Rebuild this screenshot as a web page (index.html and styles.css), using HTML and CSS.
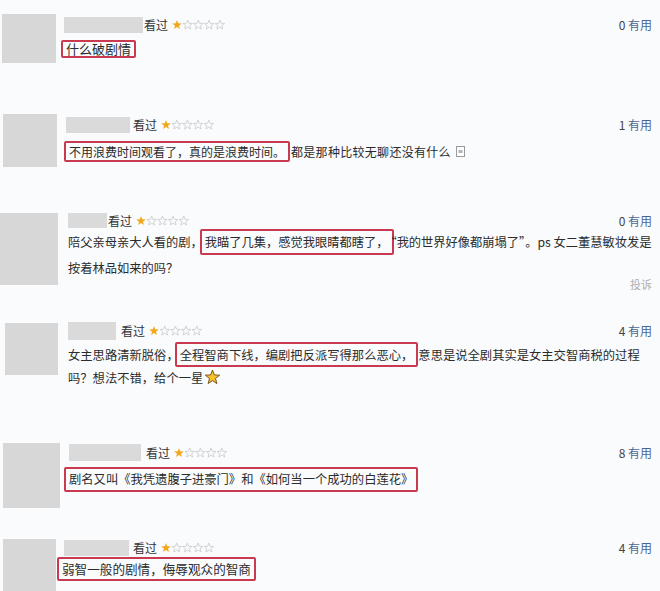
FILE: index.html
```html
<!DOCTYPE html>
<html lang="zh">
<head>
<meta charset="utf-8">
<link rel="stylesheet" href="styles.css">
</head>
<body>
<svg class="defs" width="0" height="0">
  <defs>
    <polygon id="st" points="5,0 6.23,3.3 9.76,3.45 7,5.65 7.94,9.05 5,7.1 2.06,9.05 3,5.65 0.24,3.45 3.77,3.3"/>
  </defs>
</svg>
<div class="list">

  <div class="review r1">
    <div class="avatar"></div>
    <div class="body">
      <div class="meta"><span class="name"></span><span class="seen">看过</span>
        <svg class="stars" width="53" height="10" viewBox="0 0 53 10"><use href="#st" class="on"/><use href="#st" x="10.7" class="off"/><use href="#st" x="21.4" class="off"/><use href="#st" x="32.1" class="off"/><use href="#st" x="42.8" class="off"/></svg>
        <span class="useful">0 <em>有用</em></span></div>
      <div class="text line"><span class="hl">什么破剧情</span></div>
    </div>
  </div>

  <div class="review r2">
    <div class="avatar"></div>
    <div class="body">
      <div class="meta"><span class="name"></span><span class="seen">看过</span>
        <svg class="stars" width="53" height="10" viewBox="0 0 53 10"><use href="#st" class="on"/><use href="#st" x="10.7" class="off"/><use href="#st" x="21.4" class="off"/><use href="#st" x="32.1" class="off"/><use href="#st" x="42.8" class="off"/></svg>
        <span class="useful">1 <em>有用</em></span></div>
      <div class="text line"><span class="hl">不用浪费时间观看了，真的是浪费时间。</span><span class="after">都是那种比较无聊还没有什么</span>
        <svg class="mini" width="9" height="11" viewBox="0 0 9 11"><rect x="0.5" y="0.5" width="8" height="10" fill="#fff" stroke="#9a9a9a"/><rect x="2.5" y="4" width="4" height="3" fill="#b5b5b5"/></svg></div>
    </div>
  </div>

  <div class="review r3">
    <div class="avatar"></div>
    <div class="body">
      <div class="meta"><span class="name"></span><span class="seen">看过</span>
        <svg class="stars" width="53" height="10" viewBox="0 0 53 10"><use href="#st" class="on"/><use href="#st" x="10.7" class="off"/><use href="#st" x="21.4" class="off"/><use href="#st" x="32.1" class="off"/><use href="#st" x="42.8" class="off"/></svg>
        <span class="useful">0 <em>有用</em></span></div>
      <p class="text wrap">陪父亲母亲大人看的剧，<span class="hl">我瞄了几集，感觉我眼睛都瞎了，</span><span class="quote">“</span>我的世界好像都崩塌了”。ps 女二董慧敏妆发是<br>按着林品如来的吗？</p>
      <div class="report">投诉</div>
    </div>
  </div>

  <div class="review r4">
    <div class="avatar"></div>
    <div class="body">
      <div class="meta"><span class="name"></span><span class="seen">看过</span>
        <svg class="stars" width="53" height="10" viewBox="0 0 53 10"><use href="#st" class="on"/><use href="#st" x="10.7" class="off"/><use href="#st" x="21.4" class="off"/><use href="#st" x="32.1" class="off"/><use href="#st" x="42.8" class="off"/></svg>
        <span class="useful">4 <em>有用</em></span></div>
      <p class="text wrap">女主思路清新脱俗，<span class="hl">全程智商下线，编剧把反派写得那么恶心，</span>意思是说全剧其实是女主交智商税的过程<br>吗？想法不错，给个一星<svg class="bigstar" width="15" height="15" viewBox="0 0 10 10"><use href="#st" class="emoji"/></svg></p>
    </div>
  </div>

  <div class="review r5">
    <div class="avatar"></div>
    <div class="body">
      <div class="meta"><span class="name"></span><span class="seen">看过</span>
        <svg class="stars" width="53" height="10" viewBox="0 0 53 10"><use href="#st" class="on"/><use href="#st" x="10.7" class="off"/><use href="#st" x="21.4" class="off"/><use href="#st" x="32.1" class="off"/><use href="#st" x="42.8" class="off"/></svg>
        <span class="useful">8 <em>有用</em></span></div>
      <div class="text line"><span class="hl">剧名又叫《我凭遗腹子进豪门》和《如何当一个成功的白莲花》</span></div>
    </div>
  </div>

  <div class="review r6">
    <div class="avatar"></div>
    <div class="body">
      <div class="meta"><span class="name"></span><span class="seen">看过</span>
        <svg class="stars" width="53" height="10" viewBox="0 0 53 10"><use href="#st" class="on"/><use href="#st" x="10.7" class="off"/><use href="#st" x="21.4" class="off"/><use href="#st" x="32.1" class="off"/><use href="#st" x="42.8" class="off"/></svg>
        <span class="useful">4 <em>有用</em></span></div>
      <div class="text line"><span class="hl">弱智一般的剧情，侮辱观众的智商</span></div>
    </div>
  </div>

</div>
</body>
</html>
```
FILE: styles.css
```css
* { box-sizing: border-box; }
html, body { margin: 0; padding: 0; }
body {
  background: #fafbfd;
  font-family: "Noto Sans CJK SC", "Noto Sans", sans-serif;
  color: #2b2b2b;
  width: 660px;
  height: 591px;
  overflow: hidden;
}
.defs { position: absolute; }
.list { padding: 14px 8px 0 0; }

.review {
  display: flex;
  align-items: flex-start;
  height: var(--h);
  padding-left: var(--x);
}
.avatar {
  flex: none;
  width: var(--aw);
  height: var(--ah);
  margin-top: var(--at, 0px);
  background: #d7d7d7;
}
.body {
  flex: 1;
  margin-left: var(--gap);
  margin-top: var(--bt, 0px);
  min-width: 0;
}
.meta {
  display: flex;
  align-items: center;
  height: var(--mh);
  font-size: 12px;
  line-height: 1;
}
.name {
  width: var(--nw);
  height: var(--mh);
  background: #dadada;
}
.seen { margin-left: var(--sg, 1px); color: #333; }
.stars { margin-left: 4px; }
.on { fill: #f2a81d; }
.off { fill: none; stroke: #c9c9c9; stroke-width: 0.8; }
.useful { margin-left: auto; color: #444; font-size: 12px; }
.useful em { font-style: normal; color: #4b6690; }

.text {
  margin: var(--tt) 0 0;
  font-size: var(--fs, 12px);
  line-height: var(--lh);
  white-space: nowrap;
}
.line { display: flex; align-items: center; }
.hl {
  border: 2px solid #c93a50;
  border-radius: 2px;
  padding: var(--hp, 0px) 3px;
  margin-left: var(--hx);
}
.line .hl { line-height: var(--bl); }
.after { margin-left: 1px; letter-spacing: 0.3px; }
.mini { margin-left: 5px; }
.quote { margin-left: -3px; }
.report {
  text-align: right;
  font-size: 11px;
  line-height: 14px;
  color: #b0b0b0;
  margin-top: -4px;
}
.bigstar { vertical-align: -2px; margin-left: 2px; }
.emoji { fill: #f6c22b; stroke: #6b4a12; stroke-width: 0.6; }

.r1 { --h: 100px; --x: 2px; --aw: 54px; --ah: 49px; --gap: 8px; --bt: 3px; --mh: 16px; --nw: 79px; --tt: 7px; --fs: 13px; --bl: 14px; --hx: -3px; }
.r2 { --h: 99px; --x: 3px; --aw: 54px; --ah: 53px; --gap: 9px; --bt: 3px; --mh: 16px; --nw: 64px; --sg: 3px; --tt: 8px; --fs: 12px; --bl: 17px; --hx: -2px; }
.r3 { --h: 109px; --x: 0px; --aw: 58px; --ah: 72px; --gap: 10px; --bt: 0px; --mh: 15px; --nw: 39px; --tt: 1px; --fs: 12.25px; --lh: 26px; --hp: 2.2px; --hx: -3px; }
.r4 { --h: 121px; --x: 5px; --aw: 53px; --ah: 52px; --at: 1px; --gap: 10px; --bt: 0px; --mh: 18px; --nw: 48px; --sg: 5px; --tt: 3.5px; --fs: 12.3px; --lh: 23px; --hp: 1.8px; --hx: -4px; }
.r5 { --h: 96px; --x: 3px; --aw: 57px; --ah: 65px; --gap: 9px; --bt: 1px; --mh: 17px; --nw: 72px; --sg: 5px; --tt: 6px; --fs: 12.3px; --bl: 21px; --hx: -5px; }
.r6 { --h: 60px; --x: 3px; --aw: 53px; --ah: 52px; --gap: 8px; --bt: 1px; --mh: 16px; --nw: 65px; --sg: 4px; --tt: 1px; --fs: 12.6px; --bl: 20px; --hx: -7px; }
```
